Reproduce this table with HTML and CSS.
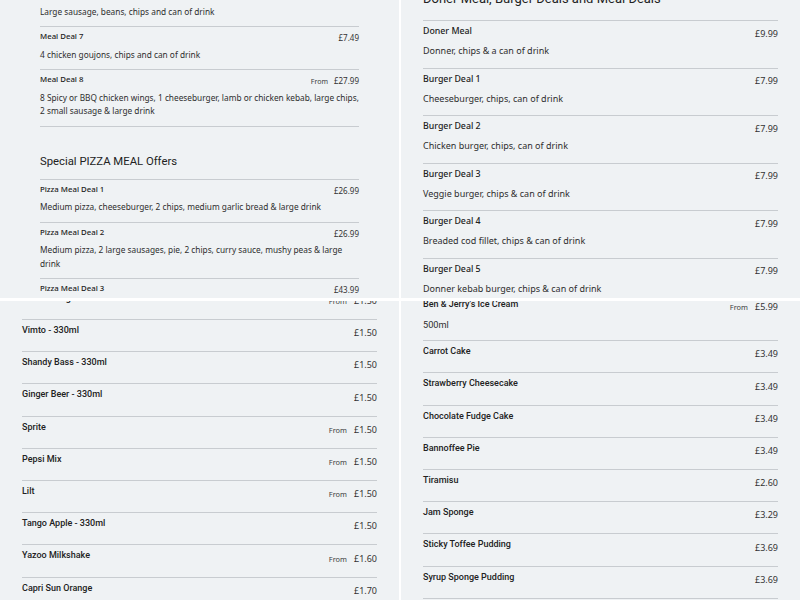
FILE: index.html
```html
<!DOCTYPE html>
<html lang="en">
<head>
<meta charset="utf-8">
<title>Menu</title>
<link rel="stylesheet" href="styles.css">
</head>
<body>
<div class="board">
  <section class="panel panel-tl">
    <div class="scroll">
      <ul class="items">
        <li class="item">
          <div class="head"><span class="name">Meal Deal 6</span><span class="price">£6.99</span></div>
          <p class="desc">Large sausage, beans, chips and can of drink</p>
        </li>
        <li class="item">
          <div class="head"><span class="name">Meal Deal 7</span><span class="price">£7.49</span></div>
          <p class="desc">4 chicken goujons, chips and can of drink</p>
        </li>
        <li class="item">
          <div class="head"><span class="name">Meal Deal 8</span><span class="price"><span class="from">From</span>£27.99</span></div>
          <p class="desc">8 Spicy or BBQ chicken wings, 1 cheeseburger, lamb or chicken kebab, large chips, 2 small sausage &amp; large drink</p>
        </li>
      </ul>
      <h2 class="section-title">Special PIZZA MEAL Offers</h2>
      <ul class="items bordered">
        <li class="item">
          <div class="head"><span class="name">Pizza Meal Deal 1</span><span class="price">£26.99</span></div>
          <p class="desc">Medium pizza, cheeseburger, 2 chips, medium garlic bread &amp; large drink</p>
        </li>
        <li class="item">
          <div class="head"><span class="name">Pizza Meal Deal 2</span><span class="price">£26.99</span></div>
          <p class="desc">Medium pizza, 2 large sausages, pie, 2 chips, curry sauce, mushy peas &amp; large drink</p>
        </li>
        <li class="item">
          <div class="head"><span class="name">Pizza Meal Deal 3</span><span class="price">£43.99</span></div>
          <p class="desc">Large pizza, 2 chips, garlic bread &amp; large drink</p>
        </li>
      </ul>
    </div>
  </section>

  <section class="panel panel-tr">
    <div class="scroll">
      <h2 class="section-title">Doner Meal, Burger Deals and Meal Deals</h2>
      <ul class="items bordered">
        <li class="item">
          <div class="head"><span class="name">Doner Meal</span><span class="price">£9.99</span></div>
          <p class="desc">Donner, chips &amp; a can of drink</p>
        </li>
        <li class="item">
          <div class="head"><span class="name">Burger Deal 1</span><span class="price">£7.99</span></div>
          <p class="desc">Cheeseburger, chips, can of drink</p>
        </li>
        <li class="item">
          <div class="head"><span class="name">Burger Deal 2</span><span class="price">£7.99</span></div>
          <p class="desc">Chicken burger, chips, can of drink</p>
        </li>
        <li class="item">
          <div class="head"><span class="name">Burger Deal 3</span><span class="price">£7.99</span></div>
          <p class="desc">Veggie burger, chips &amp; can of drink</p>
        </li>
        <li class="item">
          <div class="head"><span class="name">Burger Deal 4</span><span class="price">£7.99</span></div>
          <p class="desc">Breaded cod fillet, chips &amp; can of drink</p>
        </li>
        <li class="item">
          <div class="head"><span class="name">Burger Deal 5</span><span class="price">£7.99</span></div>
          <p class="desc">Donner kebab burger, chips &amp; can of drink</p>
        </li>
      </ul>
    </div>
  </section>

  <section class="panel panel-bl">
    <div class="scroll">
      <ul class="items">
        <li class="item"><div class="head"><span class="name">Fanta Orange</span><span class="price"><span class="from">From</span>£1.50</span></div></li>
        <li class="item"><div class="head"><span class="name">Vimto - 330ml</span><span class="price">£1.50</span></div></li>
        <li class="item"><div class="head"><span class="name">Shandy Bass - 330ml</span><span class="price">£1.50</span></div></li>
        <li class="item"><div class="head"><span class="name">Ginger Beer - 330ml</span><span class="price">£1.50</span></div></li>
        <li class="item"><div class="head"><span class="name">Sprite</span><span class="price"><span class="from">From</span>£1.50</span></div></li>
        <li class="item"><div class="head"><span class="name">Pepsi Mix</span><span class="price"><span class="from">From</span>£1.50</span></div></li>
        <li class="item"><div class="head"><span class="name">Lilt</span><span class="price"><span class="from">From</span>£1.50</span></div></li>
        <li class="item"><div class="head"><span class="name">Tango Apple - 330ml</span><span class="price">£1.50</span></div></li>
        <li class="item"><div class="head"><span class="name">Yazoo Milkshake</span><span class="price"><span class="from">From</span>£1.60</span></div></li>
        <li class="item"><div class="head"><span class="name">Capri Sun Orange</span><span class="price">£1.70</span></div></li>
      </ul>
    </div>
  </section>

  <section class="panel panel-br">
    <div class="scroll">
      <ul class="items">
        <li class="item">
          <div class="head"><span class="name">Ben &amp; Jerry's Ice Cream</span><span class="price"><span class="from">From</span>£5.99</span></div>
          <p class="desc">500ml</p>
        </li>
        <li class="item"><div class="head"><span class="name">Carrot Cake</span><span class="price">£3.49</span></div></li>
        <li class="item"><div class="head"><span class="name">Strawberry Cheesecake</span><span class="price">£3.49</span></div></li>
        <li class="item"><div class="head"><span class="name">Chocolate Fudge Cake</span><span class="price">£3.49</span></div></li>
        <li class="item"><div class="head"><span class="name">Bannoffee Pie</span><span class="price">£3.49</span></div></li>
        <li class="item"><div class="head"><span class="name">Tiramisu</span><span class="price">£2.60</span></div></li>
        <li class="item"><div class="head"><span class="name">Jam Sponge</span><span class="price">£3.29</span></div></li>
        <li class="item"><div class="head"><span class="name">Sticky Toffee Pudding</span><span class="price">£3.69</span></div></li>
        <li class="item"><div class="head"><span class="name">Syrup Sponge Pudding</span><span class="price">£3.69</span></div></li>
      </ul>
    </div>
  </section>
</div>
</body>
</html>
```

FILE: styles.css
```css
* {
  box-sizing: border-box;
  margin: 0;
  padding: 0;
}

html, body {
  background: #ffffff;
  width: 800px;
  height: 600px;
  overflow: hidden;
}

.board {
  display: grid;
  grid-template-columns: 399px 399px;
  grid-template-rows: 298px 299px;
  column-gap: 2px;
  row-gap: 3px;
}

.panel {
  background: #eff2f4;
  overflow: hidden;
  color: #262626;
}

.items {
  list-style: none;
}

.items.bordered {
  border-top: 1px solid #c8ccd0;
}

.item {
  border-bottom: 1px solid #c8ccd0;
}

.head {
  display: flex;
  justify-content: space-between;
  align-items: flex-start;
}

.name {
  font-family: "Noto Sans", sans-serif;
  font-weight: 500;
  color: #222;
}

.price {
  display: block;
  font-family: "Noto Sans", sans-serif;
  font-weight: 400;
  color: #333;
  white-space: nowrap;
  overflow: visible;
}

.from {
  display: inline-block;
  line-height: 1;
  color: #3c3c3c;
}

.desc {
  font-family: "Noto Sans", sans-serif;
  font-weight: 400;
  color: #2e2e2e;
}

.section-title {
  font-family: Roboto, sans-serif;
  font-weight: 400;
  color: #222;
}

/* top-left panel */
.panel-tl {
  padding: 0 40px;
}

.panel-tl .scroll {
  margin-top: -15.75px;
}

.panel-tl .item {
  padding: 3px 0 8px;
}

.panel-tl .name {
  font-size: 7.8px;
  line-height: 12px;
}

.panel-tl .price {
  font-size: 8px;
  line-height: 12px;
  height: 12px;
  margin-top: 2px;
  margin-bottom: -2px;
}

.panel-tl .from {
  font-size: 7px;
  margin-right: 6px;
}

.panel-tl .desc {
  font-size: 8.3px;
  line-height: 13.5px;
  margin-top: 5.5px;
}

.panel-tl .section-title {
  font-size: 11.3px;
  line-height: 14px;
  margin: 28.5px 0 9.5px;
}

/* top-right panel */
.panel-tr {
  padding: 0 22px;
}

.panel-tr .section-title {
  font-size: 13px;
  line-height: 16px;
  margin: -9px 0 13px;
}

.panel-tr .item {
  padding: 4px 0 9.5px;
}

.panel-tr .name {
  font-size: 8.8px;
  line-height: 13px;
}

.panel-tr .price {
  font-size: 9px;
  line-height: 13px;
  height: 13px;
  margin-top: 1.5px;
  margin-bottom: -1.5px;
}

.panel-tr .desc {
  font-size: 9px;
  line-height: 14px;
  margin-top: 6px;
}

/* bottom panels */
.panel-bl,
.panel-br {
  padding: 0 22px;
}

.panel-bl .scroll {
  margin-top: -13.2px;
}

.panel-br .scroll {
  margin-top: -7.5px;
}

.panel-bl .item,
.panel-br .item {
  padding: 4px 0 14.2px;
}

.panel-bl .name,
.panel-br .name {
  font-family: Roboto, sans-serif;
  font-size: 9px;
  line-height: 13px;
}

.panel-bl .price,
.panel-br .price {
  font-size: 9px;
  line-height: 13px;
  height: 13px;
  margin-top: 2.2px;
  margin-bottom: -2.2px;
}

.panel-bl .from,
.panel-br .from {
  font-size: 7.4px;
  margin-right: 7px;
}

.panel-br .desc {
  font-family: Roboto, sans-serif;
  font-size: 9.2px;
  line-height: 13px;
  margin-top: 7px;
  margin-bottom: -4.4px;
}
```
